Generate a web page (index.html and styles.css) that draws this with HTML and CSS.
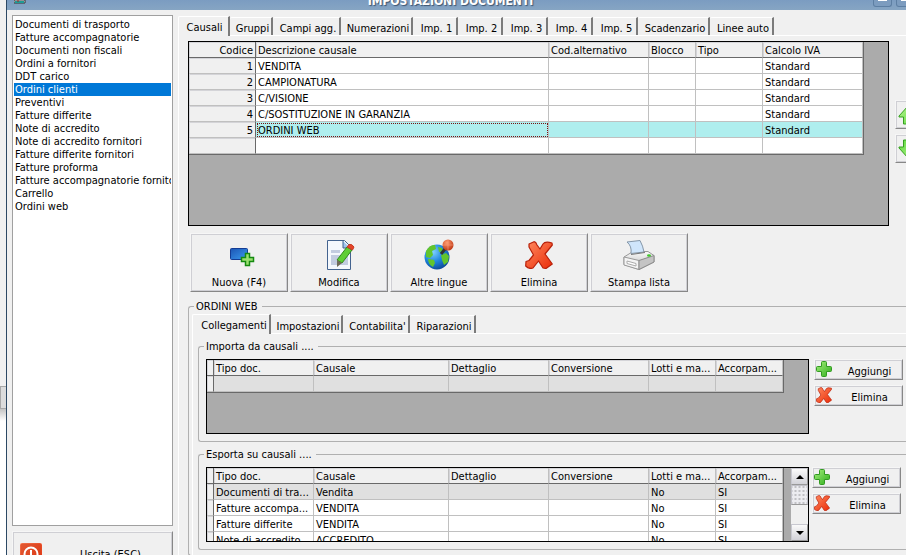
FILE: index.html
```html
<!DOCTYPE html>
<html lang="it">
<head>
<meta charset="utf-8">
<title>Impostazioni documenti</title>
<link rel="stylesheet" href="styles.css">
</head>
<body>
<svg class="defs" aria-hidden="true">
  <defs>
    <linearGradient id="gGreen" x1="0" y1="0" x2="1" y2="1"><stop offset="0" stop-color="#a4ee7c"/><stop offset="1" stop-color="#2fae1c"/></linearGradient>
    <linearGradient id="gLime" x1="0" y1="0" x2="1" y2="1"><stop offset="0" stop-color="#b4f490"/><stop offset="1" stop-color="#5fd83c"/></linearGradient>
    <linearGradient id="gRed" x1="0" y1="0" x2="1" y2="1"><stop offset="0" stop-color="#ff8a60"/><stop offset="1" stop-color="#ea2c08"/></linearGradient>
    <linearGradient id="gBlue" x1="0" y1="0" x2="1" y2="1"><stop offset="0" stop-color="#1c55b4"/><stop offset="1" stop-color="#3a9bf0"/></linearGradient>
    <radialGradient id="gGlobe" cx=".35" cy=".3" r=".8"><stop offset="0" stop-color="#7fd0ff"/><stop offset=".5" stop-color="#1f86dc"/><stop offset="1" stop-color="#0b3f8c"/></radialGradient>
    <radialGradient id="gBall" cx=".4" cy=".3" r=".8"><stop offset="0" stop-color="#ff9c70"/><stop offset="1" stop-color="#b52a08"/></radialGradient>
    <linearGradient id="gGray" x1="0" y1="0" x2="0" y2="1"><stop offset="0" stop-color="#fafafa"/><stop offset="1" stop-color="#b8b8b8"/></linearGradient>
    <symbol id="plus" viewBox="0 0 16 16"><path d="M5.500 1.500q0-1 1-1h3q1 0 1 1v4h4q1 0 1 1v3q0 1-1 1h-4v4q0 1-1 1h-3q-1 0-1-1v-4h-4q-1 0-1-1v-3q0-1 1-1h4z" fill="url(#gGreen)" stroke="#329a22"/></symbol>
    <symbol id="cross" viewBox="0 0 28 28"><path d="M4 3 L9 .7 Q11 1 12 4 L15 8 L18 3 Q20 0 27 2 L27.300 4 L20 13 L27.300 23 L21 27.500 L18 27 L13.500 20 L8 27 Q4 28.500 .7 25 L1 20.500 L4 19.500 L8.500 14 L4 6z" fill="url(#gRed)" stroke="#b8200a" stroke-width="1.200" stroke-linejoin="round"/></symbol>
    <symbol id="up" viewBox="0 0 20 20"><path d="M10 1 L19 11 V12 H14.500 V19 H5.500 V12 H1 V11z" fill="url(#gLime)" stroke="#35a020" stroke-linejoin="round"/></symbol>
  </defs>
</svg>
<div class="screen">
  <div class="behind"><span class="behind-box"></span><span class="behind-page"></span></div>
  <div class="window">
    <header class="titlebar">
      <svg class="app-icon" viewBox="0 0 12 4" aria-hidden="true"><path d="M0 0h11v3H0z" fill="#f4f4f4" stroke="#333"/><path d="M1 2h9" stroke="#1e9b95" stroke-width="2"/><path d="M4 0v2" stroke="#a22"/></svg>
      <h1>IMPOSTAZIONI DOCUMENTI</h1>
      <div class="captions">
        <button class="caption" aria-label="Riduci"><i></i></button>
        <button class="caption" aria-label="Ingrandisci"><i></i></button>
      </div>
    </header>
    <div class="content">
      <aside class="sidebar">
        <select class="doc-list" size="15" aria-label="Tipo documento">
          <option>Documenti di trasporto</option><option>Fatture accompagnatorie</option><option>Documenti non fiscali</option><option>Ordini a fornitori</option><option>DDT carico</option><option selected>Ordini clienti</option><option>Preventivi</option><option>Fatture differite</option><option>Note di accredito</option><option>Note di accredito fornitori</option><option>Fatture differite fornitori</option><option>Fatture proforma</option><option>Fatture accompagnatorie fornitori</option><option>Carrello</option><option>Ordini web</option>
        </select>
        <div class="exit-slot">
          <button class="btn exit">
            <svg viewBox="0 0 22 22" aria-hidden="true"><rect width="22" height="22" rx="2" fill="url(#gRed)"/><rect x=".5" y=".5" width="21" height="21" rx="2" fill="#d03a18" fill-opacity=".6"/><circle cx="11" cy="11" r="6.500" fill="none" stroke="#fff" stroke-width="2"/><path d="M11 7v8" stroke="#fff" stroke-width="2"/></svg>
            <span>Uscita (ESC)</span>
          </button>
        </div>
      </aside>
      <main class="main">
        <div class="tabs" role="tablist">
          <button class="tab w52 active" role="tab" aria-selected="true">Causali</button><button class="tab w43" role="tab">Gruppi</button><button class="tab w68" role="tab">Campi agg.</button><button class="tab w72" role="tab">Numerazioni</button><button class="tab w45" role="tab">Imp. 1</button><button class="tab w45" role="tab">Imp. 2</button><button class="tab w45" role="tab">Imp. 3</button><button class="tab w45" role="tab">Imp. 4</button><button class="tab w45" role="tab">Imp. 5</button><button class="tab w72" role="tab">Scadenzario</button><button class="tab w64" role="tab">Linee auto</button>
        </div>
        <div class="panel outer">
          <div class="grid-row">
            <div class="grid big">
              <table>
                <colgroup><col class="c67"><col class="c293"><col class="c100"><col class="c47"><col class="c67"><col class="c100"></colgroup>
                <thead><tr><th class="rh">Codice</th><th>Descrizione causale</th><th>Cod.alternativo</th><th>Blocco</th><th>Tipo</th><th>Calcolo IVA</th></tr></thead>
                <tbody>
                  <tr><th class="rh">1</th><td>VENDITA</td><td></td><td></td><td></td><td>Standard</td></tr>
                  <tr><th class="rh">2</th><td>CAMPIONATURA</td><td></td><td></td><td></td><td>Standard</td></tr>
                  <tr><th class="rh">3</th><td>C/VISIONE</td><td></td><td></td><td></td><td>Standard</td></tr>
                  <tr><th class="rh">4</th><td>C/SOSTITUZIONE IN GARANZIA</td><td></td><td></td><td></td><td>Standard</td></tr>
                  <tr class="current"><th class="rh">5</th><td class="focus">ORDINI WEB</td><td></td><td></td><td></td><td>Standard</td></tr>
                  <tr><th class="rh"></th><td></td><td></td><td></td><td></td><td></td></tr>
                </tbody>
              </table>
            </div>
            <div class="movers">
              <button class="btn mover" aria-label="Sposta su"><svg viewBox="0 0 20 20"><use href="#up"/></svg></button>
              <button class="btn mover down" aria-label="Sposta giù"><svg viewBox="0 0 20 20"><use href="#up"/></svg></button>
            </div>
          </div>
          <div class="toolbar">
            <button class="btn tool">
              <svg viewBox="0 0 32 32" aria-hidden="true"><rect x="7.500" y="9.500" width="17" height="11" rx="1" fill="url(#gBlue)" stroke="#143c94"/><path d="M22.500 14.500h4v4h4v4h-4v4h-4v-4h-4v-4h4z" fill="#9be070" stroke="#158a10" stroke-width="1.500"/></svg>
              <span>Nuova (F4)</span></button>
            <button class="btn tool">
              <svg viewBox="0 0 32 32" aria-hidden="true"><path d="M4.500 1.500h17l6 6v23h-23z" fill="#f4f8fd" stroke="#43638f"/><path d="M20 2v7h7" fill="#9fc4ee" stroke="#43638f"/><path d="M8 11h9v3H8zM8 16h17v10H8z" fill="#c2cce0"/><path d="M14 21 L24 8 L29 11 L19 24z" fill="#5fce35" stroke="#338a1d"/><path d="M14 21 L19 24 L14 28z" fill="#6f6a58"/><path d="M24 8l2-2.500q3-1 5 2.500l-1.500 3z" fill="#e54428" stroke="#c83a20"/></svg>
              <span>Modifica</span></button>
            <button class="btn tool">
              <svg viewBox="0 0 32 32" aria-hidden="true"><circle cx="14" cy="18" r="12.500" fill="url(#gGlobe)"/><path d="M3 12q4-7 9-6l1 4-4 2 1 4-3 3-4-1zM6 20l5 1 1 3-2 4q-5-3-5-8zM18 16l5-2 3 3-1 6-4 3-2-5zM15 8l4 1 1 3-4 1z" fill="#62c52c"/><path d="M18 15l4-5" stroke="#333" stroke-width="3"/><circle cx="25" cy="6" r="5.500" fill="url(#gBall)"/><path d="M20 6h10M25 1v10" stroke="#ffa080" stroke-opacity=".5"/></svg>
              <span>Altre lingue</span></button>
            <button class="btn tool">
              <svg viewBox="-2 -2 32 32" aria-hidden="true"><use href="#cross" width="28" height="28"/></svg>
              <span>Elimina</span></button>
            <button class="btn tool">
              <svg viewBox="0 0 32 32" aria-hidden="true"><path d="M1 18l9-5.500h15l6 4v6.500l-15 7.500-15-5z" fill="url(#gGray)" stroke="#999"/><path d="M1 18l15 3.500v9L1 26z" fill="#f4f4f4" stroke="#999"/><path d="M16 21.500l15-5v6.500l-15 7.500z" fill="#c4c4c4" stroke="#8c8c8c"/><path d="M4 22l9 2.500v2.500l-9-2.500z" fill="#fff" stroke="#aaa"/><path d="M8 14.500Q9 7 4 3L17 1.500Q20 7 21 13z" fill="#cfe5fb" stroke="#8496a8"/><path d="M8 15.500l14-2" stroke="#777"/><ellipse cx="26" cy="16.500" rx="2" ry="1.200" fill="#3fc52a"/></svg>
              <span>Stampa lista</span></button>
          </div>
          <fieldset class="group detail">
            <legend>ORDINI WEB</legend>
            <div class="tabs sub" role="tablist">
              <button class="tab w79 active" role="tab" aria-selected="true">Collegamenti</button><button class="tab w72" role="tab">Impostazioni</button><button class="tab w67" role="tab">Contabilita'</button><button class="tab w66" role="tab">Riparazioni</button>
            </div>
            <div class="panel inner">
              <fieldset class="group links">
                <legend>Importa da causali ....</legend>
                <div class="link-row">
                  <div class="grid small">
                    <table>
                      <colgroup><col class="c7"><col class="c100"><col class="c135"><col class="c100"><col class="c100"><col class="c67"><col class="c67"></colgroup>
                      <thead><tr><th class="rh"></th><th>Tipo doc.</th><th>Causale</th><th>Dettaglio</th><th>Conversione</th><th>Lotti e ma...</th><th>Accorpam...</th></tr></thead>
                      <tbody><tr class="soft"><th class="rh"></th><td></td><td></td><td></td><td></td><td></td><td></td></tr></tbody>
                    </table>
                  </div>
                  <div class="side-buttons">
                    <button class="btn side"><svg aria-hidden="true"><use href="#plus"/></svg><span>Aggiungi</span></button>
                    <button class="btn side"><svg aria-hidden="true"><use href="#cross"/></svg><span>Elimina</span></button>
                  </div>
                </div>
              </fieldset>
              <fieldset class="group links export">
                <legend>Esporta su causali ....</legend>
                <div class="link-row">
                  <div class="grid small">
                    <table>
                      <colgroup><col class="c7"><col class="c100"><col class="c135"><col class="c100"><col class="c100"><col class="c67"><col class="c67"></colgroup>
                      <thead><tr><th class="rh"></th><th>Tipo doc.</th><th>Causale</th><th>Dettaglio</th><th>Conversione</th><th>Lotti e ma...</th><th>Accorpam...</th></tr></thead>
                      <tbody>
                        <tr class="soft"><th class="rh"></th><td>Documenti di tra...</td><td>Vendita</td><td></td><td></td><td>No</td><td>SI</td></tr>
                        <tr><th class="rh"></th><td>Fatture accompa...</td><td>VENDITA</td><td></td><td></td><td>No</td><td>SI</td></tr>
                        <tr><th class="rh"></th><td>Fatture differite</td><td>VENDITA</td><td></td><td></td><td>No</td><td>SI</td></tr>
                        <tr><th class="rh"></th><td>Note di accredito</td><td>ACCREDITO</td><td></td><td></td><td>No</td><td>SI</td></tr>
                      </tbody>
                    </table>
                    <div class="scroll">
                      <button class="arrow" aria-label="Scorri su"><svg viewBox="0 0 8 4"><path d="M4 0l4 4H0z"/></svg></button>
                      <span class="thumb"></span>
                      <button class="arrow last" aria-label="Scorri giù"><svg viewBox="0 0 8 4"><path d="M0 0h8L4 4z"/></svg></button>
                    </div>
                  </div>
                  <div class="side-buttons">
                    <button class="btn side"><svg aria-hidden="true"><use href="#plus"/></svg><span>Aggiungi</span></button>
                    <button class="btn side"><svg aria-hidden="true"><use href="#cross"/></svg><span>Elimina</span></button>
                  </div>
                </div>
              </fieldset>
            </div>
          </fieldset>
        </div>
      </main>
    </div>
  </div>
</div>
</body>
</html>
```
FILE: styles.css
```css
* { box-sizing: border-box; }
body {
  margin: 0;
  overflow: hidden;
  background: #f0f0f0;
  color: #000;
  font: 11px/14px Tahoma, "DejaVu Sans Condensed", "Noto Sans", sans-serif;
}
button, select { font: inherit; color: inherit; margin: 0; }
.defs { display: block; width: 0; height: 0; }
.screen { display: flex; height: 100vh; overflow: hidden; }

/* window lying behind this one */
.behind { flex: none; width: 6px; display: flex; flex-direction: column; padding-top: 386px; }
.behind-box { height: 23px; background: #dcdcdc; border: 1px solid #a8a8a8; border-right: 0; flex: none; }
.behind-page { flex: 1; background: linear-gradient(#c4c4c4, #fff 12px); }

.window { flex: 1; min-width: 0; display: flex; flex-direction: column; border-left: 1px solid #2c4864; }
.titlebar {
  flex: none;
  height: 10px;
  display: flex;
  align-items: flex-end;
  justify-content: space-between;
  overflow: hidden;
  background: linear-gradient(#7b9cc1, #86a5c3);
  padding-left: 7px;
}
.app-icon { width: 12px; height: 4px; flex: none; align-self: flex-start; }
h1 {
  margin: 0;
  padding: 0 0 2px 2px;
  font-size: 12px;
  line-height: 14px;
  color: #fff;
  text-shadow: 1px 1px 1px #3d5570;
}
.captions { display: flex; gap: 4px; align-self: flex-start; width: 33px; overflow: hidden; }
.caption {
  flex: none;
  width: 19px;
  height: 7px;
  padding: 0;
  border: 1px solid #5d7fa3;
  border-top: 0;
  border-radius: 0 0 3px 3px;
  background: #7c9cbf;
  display: flex;
  justify-content: center;
}
.caption i { width: 9px; height: 1px; background: #fff; }

.content { flex: 1; display: flex; min-height: 0; overflow: hidden; }
.sidebar { flex: none; width: 171px; padding: 5px 5px 0; display: flex; flex-direction: column; }
.doc-list {
  flex: 1;
  min-height: 0;
  width: 100%;
  padding: 2px 1px 1px;
  border: 1px solid #a0a0a0;
  border-radius: 0;
  background: #fff;
  overflow: hidden;
  outline: 0;
}
.doc-list option { min-height: 13px; height: 13px; line-height: 13px; padding: 0 1px; overflow: hidden; }
.doc-list option:checked { background: linear-gradient(#0078d7, #0078d7); color: #fff; -webkit-text-fill-color: #fff; }
.exit-slot { flex: none; height: 24px; margin-top: 5px; overflow: hidden; }
.exit { width: 100%; height: 46px; display: flex; align-items: center; padding: 0 7px; }
.exit svg { width: 22px; height: 22px; }
.exit span { flex: 1; text-align: center; padding: 2px 0 0 14px; }

.btn {
  border: 1px solid;
  border-color: #f6f6f6 #878787 #878787 #f6f6f6;
  border-radius: 0;
  background: #f0f0f0;
  box-shadow: inset 0 0 0 1px #cfcfd4;
}

.main { flex: 1; min-width: 0; padding-top: 6px; }
.tabs { display: flex; align-items: flex-end; height: 20px; }
.tab {
  height: 18px;
  margin-bottom: 1px;
  padding: 4px 0 0 4px;
  border: 0;
  border-top: 1px solid #fff;
  border-right: 2px solid #7b7b7b;
  border-radius: 2px 0 0 0;
  background: #f0f0f0;
  white-space: nowrap;
  text-align: center;
  line-height: 13px;
}
.tab.active {
  height: 20px;
  margin-bottom: 0;
  padding: 2px 0 0 2px;
  border-left: 1px solid #fff;
  position: relative;
  z-index: 1;
}
.sub .active { padding-left: 6px; }
.w43 { width: 43px; } .w45 { width: 45px; } .w52 { width: 52px; } .w64 { width: 64px; }
.w66 { width: 66px; } .w67 { width: 67px; } .w68 { width: 68px; } .w72 { width: 72px; } .w79 { width: 79px; }
.panel { border-left: 1px solid #fff; border-top: 1px solid #fff; margin-top: -1px; }
.outer { padding: 5px 0 0 9px; }
.inner { padding: 5px 0 5px 5px; }

.grid-row { display: flex; gap: 6px; }
.grid { flex: 1; min-width: 0; background: #ababab; border: 1px solid #000; overflow: hidden; display: flex; align-items: flex-start; }
.big { height: 185px; }
.small { height: 75px; }
table {
  flex: none;
  table-layout: fixed;
  width: 0;
  border-collapse: separate;
  border-spacing: 0;
  border-right: 1px solid #696969;
  border-bottom: 1px solid #696969;
}
th, td {
  height: 16px;
  padding: 3px 2px 0;
  border-right: 1px solid #c0c0c0;
  border-bottom: 1px solid #c0c0c0;
  background: #fff;
  font-weight: normal;
  text-align: left;
  line-height: 12px;
  white-space: nowrap;
  overflow: hidden;
}
th { background: #f0f0f0; box-shadow: inset 1px 1px 0 #d4d4d8; }
thead th { border-bottom-color: #696969; }
.rh { text-align: right; border-right-color: #696969; }
.small .rh { padding: 0; }
.current td { background: #afeeee; }
.current .focus { outline: 1px dotted #7a1010; outline-offset: -2px; }
.soft td { background: #e0e0e0; }
.c7 { width: 7px; } .c47 { width: 47px; } .c67 { width: 67px; }
.c100 { width: 100px; } .c135 { width: 135px; } .c293 { width: 293px; }

.movers { flex: none; width: 11px; padding-top: 59px; display: flex; flex-direction: column; gap: 5px; }
.mover { width: 25px; height: 29px; padding: 0; display: flex; align-items: center; justify-content: center; }
.mover svg { width: 20px; height: 20px; flex: none; }
.down svg { transform: rotate(180deg); }

.toolbar { display: flex; gap: 2px; padding: 7px 0 0 2px; }
.tool { width: 98px; height: 59px; padding: 5px 0 0; display: flex; flex-direction: column; align-items: center; gap: 5px; }
.tool svg { width: 32px; height: 32px; }

.group { margin: 0; min-width: 0; border: 1px solid #b0b0b0; border-right: 0; border-radius: 3px 0 0 3px; }
legend { padding: 0 4px 0 2px; height: 14px; line-height: 15px; }
.detail { margin-top: 7px; padding: 1px 0 0 3px; }
.detail > legend { margin-left: 2px; }
.links { padding: 6px 3px 7px 7px; border-right: 0; }
.links > legend { margin-left: -2px; }
.links + .links { margin-top: 5px; }
.export { padding-right: 5px; }
.link-row { display: flex; gap: 5px; }
.export .link-row { gap: 3px; }
.side-buttons { flex: none; width: 89px; display: flex; flex-direction: column; gap: 5px; }
.side { height: 21px; padding: 0 1px; display: flex; align-items: center; }
.side svg { width: 16px; height: 16px; flex: none; margin-bottom: 2px; }
.side span { flex: 1; text-align: center; padding: 4px 0 0 6px; }

.scroll { flex: none; align-self: stretch; width: 17px; margin-left: auto; background: #f0f0f0; display: flex; flex-direction: column; }
.arrow {
  height: 17px;
  padding: 0;
  display: flex;
  align-items: center;
  justify-content: center;
  border: 1px solid #c8c8d0;
  border-right-color: #999;
  border-bottom-color: #999;
  background: linear-gradient(#fafafa, #d2d2d8);
}
.arrow svg { width: 8px; height: 4px; }
.last { margin-top: auto; }
.thumb {
  height: 20px;
  border: 1px solid #c0c0c8;
  border-bottom-color: #999;
  background: radial-gradient(circle, #c0c0c4 1px, #ececf0 1px) center / 4px 4px;
}
```
